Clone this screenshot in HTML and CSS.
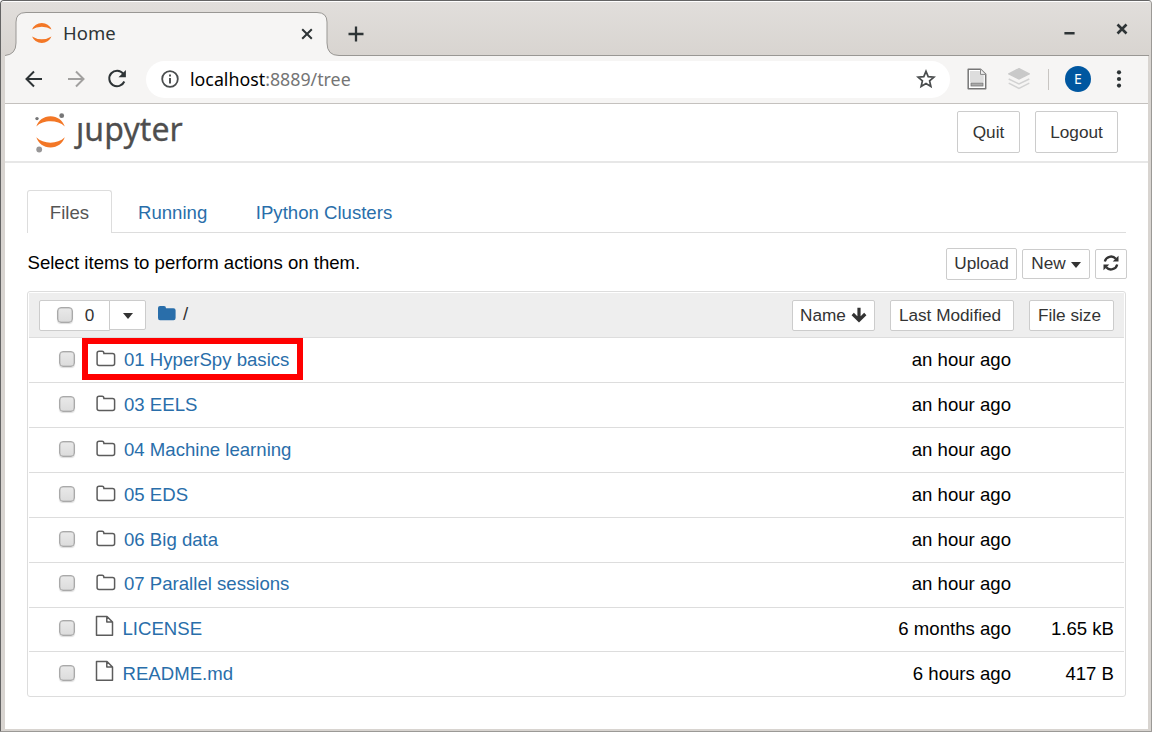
FILE: index.html
```html
<!DOCTYPE html>
<html lang="en">
<head>
<meta charset="utf-8">
<title>Home</title>
<link rel="stylesheet" href="styles.css">
</head>
<body>
<svg class="defs" width="0" height="0">
  <symbol id="folder" viewBox="0 0 20 18"><path d="M1.100 13.500V3.300Q1.100 1.200 3.100 1.200H6Q7.900 1.200 7.900 3.400H16.500Q18.600 3.400 18.600 5.500V13.500Q18.600 15.500 16.500 15.500H3.100Q1.100 15.500 1.100 13.500Z" fill="none" stroke="#5c5c5c" stroke-width="1.500"/></symbol>
  <symbol id="file" viewBox="0 0 20 22"><path d="M1.500 1.500H12L17.500 7V20.200H1.500ZM11.800 1.500V7H17.500" fill="none" stroke="#5c5c5c" stroke-width="1.500" stroke-linejoin="round"/></symbol>
</svg>
<div class="window">
  <header class="titlebar">
    <svg class="tab-shape" width="1144" height="45" viewBox="0 0 1144 45"><path d="M0 44.500Q11 43.500 11 32V11Q11 1.500 21 1.500H312Q322 1.500 322 11V32Q322 44.500 334 44.500H1144V45H0Z" fill="#f6f5f4"/><path d="M0 44.500Q11 43.500 11 32V11Q11 1.500 21 1.500H312Q322 1.500 322 11V32Q322 44.500 334 44.500H1144" fill="none" stroke="#999794"/></svg>
    <svg class="favicon" width="22" height="22" viewBox="0 0 22 22" fill="#f37726"><path d="M1 7.500Q4 1 10.800 1T20.500 7.500Q16.500 4.700 10.800 4.700T1 7.500ZM1 14.500Q4 21 10.800 21T20.500 14.500Q16.500 17.200 10.800 17.200T1 14.500Z"/></svg>
    <span class="tab-title">Home</span>
    <svg class="tab-close" width="12" height="12" viewBox="0 0 12 12"><path d="M1.200 1.200L10.800 10.800M10.800 1.200L1.200 10.800" stroke="#2e3436" stroke-width="2"/></svg>
    <svg class="tab-new" width="16" height="16" viewBox="0 0 16 16"><path d="M8 .5V15.500M.5 8H15.500" stroke="#2e3436" stroke-width="2.300"/></svg>
    <svg class="minimize" width="11" height="12" viewBox="0 0 11 12"><path d="M.4 9.200H10.600" stroke="#2e3436" stroke-width="2.500"/></svg>
    <svg class="close" width="12" height="12" viewBox="0 0 12 12"><path d="M1.500 1.500L10.500 10.500M10.500 1.500L1.500 10.500" stroke="#2e3436" stroke-width="2.600"/></svg>
  </header>
  <nav class="toolbar">
    <svg class="back" width="18" height="18" viewBox="0 0 18 18"><path d="M17 9H2M9 1.500L1.500 9L9 16.500" fill="none" stroke="#2e3436" stroke-width="2"/></svg>
    <svg class="forward" width="18" height="18" viewBox="0 0 18 18"><path d="M1 9H16M9 1.500L16.500 9L9 16.500" fill="none" stroke="#a1a09f" stroke-width="2"/></svg>
    <svg class="reload" width="20" height="20" viewBox="0 0 20 20"><path d="M16.200 4.600A7.800 7.800 0 1 0 17.300 12.500" fill="none" stroke="#2e3436" stroke-width="2"/><path d="M18.900 1V8.300H11.500Z" fill="#2e3436"/></svg>
    <div class="address">
      <svg class="info" width="18" height="18" viewBox="0 0 18 18"><circle cx="9" cy="9" r="7.800" fill="none" stroke="#4a4d4e" stroke-width="1.800"/><path d="M9 4.500V6.500M9 8V13.500" stroke="#4a4d4e" stroke-width="1.900"/></svg>
      <span class="url">localhost<span class="path">:8889/tree</span></span>
      <svg class="star" width="20" height="20" viewBox="0 0 20 20"><path d="M10 2.300L12.200 7.600L18 8.100L13.600 11.900L14.900 17.500L10 14.500L5.100 17.500L6.400 11.900L2 8.100L7.800 7.600Z" fill="none" stroke="#4a4d4e" stroke-width="1.700"/></svg>
    </div>
    <svg class="reader" width="20" height="22" viewBox="0 0 20 22"><path d="M1.200 1.200H13.500L18.700 6.400V20.700H1.200Z" fill="#fff" stroke="#767676" stroke-width="1.500" stroke-linejoin="round"/><path d="M3 3H12.500L16.800 7.200V14H3Z" fill="#ddd"/><path d="M13.500 1.200V6.400H18.700" fill="#eee" stroke="#888"/><rect x="4" y="15" width="12" height="3" fill="#aaa" stroke="#777" stroke-width=".8"/></svg>
    <svg class="layers" width="22" height="22" viewBox="0 0 22 22" fill="none" stroke="#d2d2d2" stroke-width="1.500"><path d="M.7 11L11 16L21.300 11M.7 15.200L11 20.300L21.300 15.200"/><path d="M11 .7L21 5.900L11 11L1 5.900Z" fill="#c9c9c9" stroke="#c9c9c9"/></svg>
    <span class="divider"></span>
    <span class="avatar">E</span>
    <svg class="menu" width="6" height="20" viewBox="0 0 6 20" fill="#2e3436"><circle cx="3" cy="3.300" r="2.100"/><circle cx="3" cy="10" r="2.100"/><circle cx="3" cy="16.600" r="2.100"/></svg>
  </nav>
  <div class="brandbar">
    <svg class="logo" width="32" height="40" viewBox="0 0 32 40"><path d="M2.300 13.500C4.500 7.500 9.500 3.300 16.500 3.300S28.500 7.500 30.800 13.500C27 9.700 22 8.200 16.500 8.200S6 9.700 2.300 13.500ZM2.300 24.300C4.500 30.500 9.500 34.500 16.500 34.500S28.500 30.500 30.800 24.300C27 28 22 29.700 16.500 29.700S6 28 2.300 24.300Z" fill="#f37726"/><circle cx="27.700" cy="2.700" r="2.400" fill="#767677"/><circle cx="3" cy="5.600" r="1.700" fill="#767677"/><circle cx="5.200" cy="36.500" r="2.900" fill="#989798"/></svg>
    <span class="wordmark"><span class="dotless">j</span>upyter</span>
    <button class="btn large quit">Quit</button>
    <button class="btn large">Logout</button>
  </div>
  <main class="page">
    <div class="tabs"><a class="active">Files</a><a class="running">Running</a><a class="clusters">IPython Clusters</a></div>
    <div class="actions">
      <span class="hint">Select items to perform actions on them.</span>
      <button class="btn upload">Upload</button>
      <button class="btn new">New<i class="caret"></i></button>
      <button class="btn refresh"><svg width="16" height="16" viewBox="0 0 16 16"><path d="M1.800 6.500A6.400 6.400 0 0 1 12.800 3.700M14.200 9.500A6.400 6.400 0 0 1 3.200 12.300" fill="none" stroke="#333" stroke-width="2.300"/><path d="M15.500 .8V6.600H9.700ZM.5 15.200V9.400H6.300Z" fill="#333"/></svg></button>
    </div>
    <section class="list">
      <div class="list-head">
        <div class="btn select"><i class="check"></i><span>0</span></div>
        <div class="btn drop"><i class="caret"></i></div>
        <svg class="home" width="18" height="15" viewBox="0 0 18 15"><path d="M0 2Q0 0 2 0H6Q8 0 8 2.200H15.500Q17.600 2.200 17.600 4.300V12Q17.600 14.200 15.500 14.200H2Q0 14.200 0 12Z" fill="#296eaa"/></svg>
        <span class="slash">/</span>
        <button class="btn name">Name<svg width="16" height="16" viewBox="0 0 16 16"><path d="M8 .8V13M1.700 7L8 13.200L14.300 7" fill="none" stroke="#333" stroke-width="3.200"/></svg></button>
        <button class="btn modified">Last Modified</button>
        <button class="btn size">File size</button>
      </div>
      <div class="row"><i class="check"></i><svg class="icon"><use href="#folder"/></svg><a>01 HyperSpy basics</a><span class="when">an hour ago</span><span class="bytes"></span><span class="highlight"></span></div>
      <div class="row"><i class="check"></i><svg class="icon"><use href="#folder"/></svg><a>03 EELS</a><span class="when">an hour ago</span><span class="bytes"></span></div>
      <div class="row"><i class="check"></i><svg class="icon"><use href="#folder"/></svg><a>04 Machine learning</a><span class="when">an hour ago</span><span class="bytes"></span></div>
      <div class="row"><i class="check"></i><svg class="icon"><use href="#folder"/></svg><a>05 EDS</a><span class="when">an hour ago</span><span class="bytes"></span></div>
      <div class="row"><i class="check"></i><svg class="icon"><use href="#folder"/></svg><a>06 Big data</a><span class="when">an hour ago</span><span class="bytes"></span></div>
      <div class="row raised"><i class="check"></i><svg class="icon"><use href="#folder"/></svg><a>07 Parallel sessions</a><span class="when">an hour ago</span><span class="bytes"></span></div>
      <div class="row doc short"><i class="check"></i><svg class="icon"><use href="#file"/></svg><a>LICENSE</a><span class="when">6 months ago</span><span class="bytes">1.65 kB</span></div>
      <div class="row doc"><i class="check"></i><svg class="icon"><use href="#file"/></svg><a>README.md</a><span class="when">6 hours ago</span><span class="bytes">417 B</span></div>
    </section>
  </main>
</div>
</body>
</html>
```
FILE: styles.css
```css
* { box-sizing: border-box; }
body { margin: 0; background: #fff; color: #000; font: 18.600px/24px "Liberation Sans", Arial, sans-serif; }
svg { display: block; flex: none; }
.defs { position: absolute; }
.window { width: 1152px; height: 732px; border: 1px solid #646464; border-right-color: #9b9996; border-bottom-color: #9b9996; border-radius: 4px 4px 1px 1px; padding: 0 3px 3px 4px; background: #d8d4d0; overflow: hidden; }

.titlebar { position: relative; display: flex; height: 55px; margin: 0 -3px 0 -4px; padding: 0 3px 0 4px; background: linear-gradient(#fff 0, #fff 1px, #e1dedb 1px, #d8d4d0 100%); }
.tab-shape { position: absolute; left: 4px; top: 10px; }
.favicon { position: relative; margin: 21px 0 0 26px; }
.tab-title { position: relative; width: 60px; margin: 19px 0 0 10px; font: 18.500px/26px "Noto Sans", sans-serif; color: #2e3436; }
.tab-close { position: relative; margin: 27px 0 0 178px; }
.tab-new { margin: 25px 0 0 35px; }
.minimize { margin: 23px 0 0 700px; }
.close { margin: 22px 0 0 41px; }

.toolbar { display: flex; align-items: center; height: 48px; padding: 0 0 1px 20px; background: #f6f5f4; border-bottom: 1px solid #c4c1be; }
.forward { margin-left: 24px; }
.reload { margin-left: 22px; }
.address { display: flex; align-items: center; width: 804px; height: 37px; margin-left: 19px; padding: 0 14px 0 15px; border-radius: 19px; background: #fff; }
.url { margin: 0 auto 0 11px; font: 17.800px/26px "Noto Sans", sans-serif; }
.path { color: #757575; }
.reader { margin-left: 17px; }
.layers { margin-left: 21px; }
.divider { width: 1px; height: 21px; margin-left: 18px; background: #c8c5c2; }
.avatar { width: 26px; height: 26px; margin-left: 16px; border-radius: 50%; background: #0057a0; color: #fff; font: 14px/26px "Noto Sans", sans-serif; text-align: center; }
.menu { margin-left: 25px; }

.brandbar { display: flex; height: 59px; padding: 7px 30px 0 29px; background: #fff; border-bottom: 2px solid #e7e7e7; }
.logo { margin: 2px 0 0 0; }
.wordmark { margin: -3px auto 0 10px; font: 32px/42px "Noto Sans", sans-serif; letter-spacing: .1px; color: #4e4e4e; -webkit-text-stroke: .3px #4e4e4e; }
.dotless { display: inline-block; clip-path: inset(15px -4px -4px -8px); }

.btn { display: flex; align-items: center; justify-content: center; padding: 0; border: 1px solid #ccc; border-radius: 2px; background: #fff; color: #333; font: 17.200px/24px "Liberation Sans", Arial, sans-serif; }
.large { width: 83px; height: 42px; }
.quit { width: 63px; margin-right: 15px; }

.page { height: 566px; padding: 27px 22px 0; background: #fff; }
.tabs { display: flex; height: 43px; border-bottom: 1px solid #ddd; color: #296eaa; line-height: 43px; }
.active { width: 85px; height: 43px; border: 1px solid #ddd; border-bottom: 0; border-radius: 3px 3px 0 0; background: #fff; color: #555; text-align: center; }
.running { margin-left: 26px; }
.clusters { margin-left: 48.500px; }
.tabs a:not(.active) { padding-top: 1px; }

.actions { display: flex; align-items: center; height: 32px; margin-top: 15px; }
.actions .btn, .list-head .btn { padding-bottom: 2px; }
.hint { margin: -2px auto 0 .5px; }
.upload { width: 71px; height: 32px; }
.new { width: 68px; height: 30px; margin-left: 5px; }
.refresh { width: 32px; height: 30px; margin: 0 -1px 0 5px; }
.caret { border: 5.500px solid transparent; border-top: 6px solid #333; border-bottom: 0; }
.new .caret { margin: 4px 0 0 5px; }
.drop .caret { margin-top: 3px; }

.list { width: 1099px; margin-top: 11px; padding: 1px 1px 0; border: 1px solid #ddd; border-radius: 3px; }
.list-head { display: flex; height: 45px; padding: 7px 10px 0; background: #eee; border-bottom: 1px solid #ddd; }
.select { width: 71px; height: 31px; border-radius: 2px 0 0 2px; }
.select .check { margin-left: 2px; }
.select span { margin-left: 12px; }
.drop { width: 37px; height: 30px; margin-left: -1px; border-radius: 0 2px 2px 0; }
.home { margin: 6px 0 0 12px; }
.slash { margin: 2px auto 0 7px; color: #333; }
.name { width: 83px; height: 31px; }
.name svg { margin-left: 5px; }
.modified { width: 124px; height: 31px; margin-left: 15px; padding-right: 4px; }
.size { width: 85px; height: 31px; margin-left: 15px; padding-right: 4px; }

.check { width: 16px; height: 16px; border: 1.500px solid #a9a9a9; border-radius: 4px; background: linear-gradient(#e9e9e9, #dcdcdc); box-shadow: 0 1px 1px #ddd, inset 0 0 0 .5px #b8b8b8; }
.row { position: relative; display: flex; align-items: center; height: 45px; padding: 0 10px 0 30px; border-bottom: 1px solid #ddd; }
.row:last-child { height: 44px; border: 0; }
.row.short { height: 44px; padding-bottom: 1px; }
.row.raised { padding-bottom: 2px; }
.row .check { margin-top: -2px; }
.icon { width: 20px; height: 18px; margin: -2px 8px 0 21px; }
.doc .icon { height: 22px; margin: -7px 7px 0 20px; }
.row.doc a { margin-left: .5px; }
.row a { color: #296eaa; }
.when { margin-left: auto; }
.bytes { width: 103px; text-align: right; }
.highlight { position: absolute; left: 53px; top: 0; width: 221px; height: 42px; border: 6px solid #f00; }
```
